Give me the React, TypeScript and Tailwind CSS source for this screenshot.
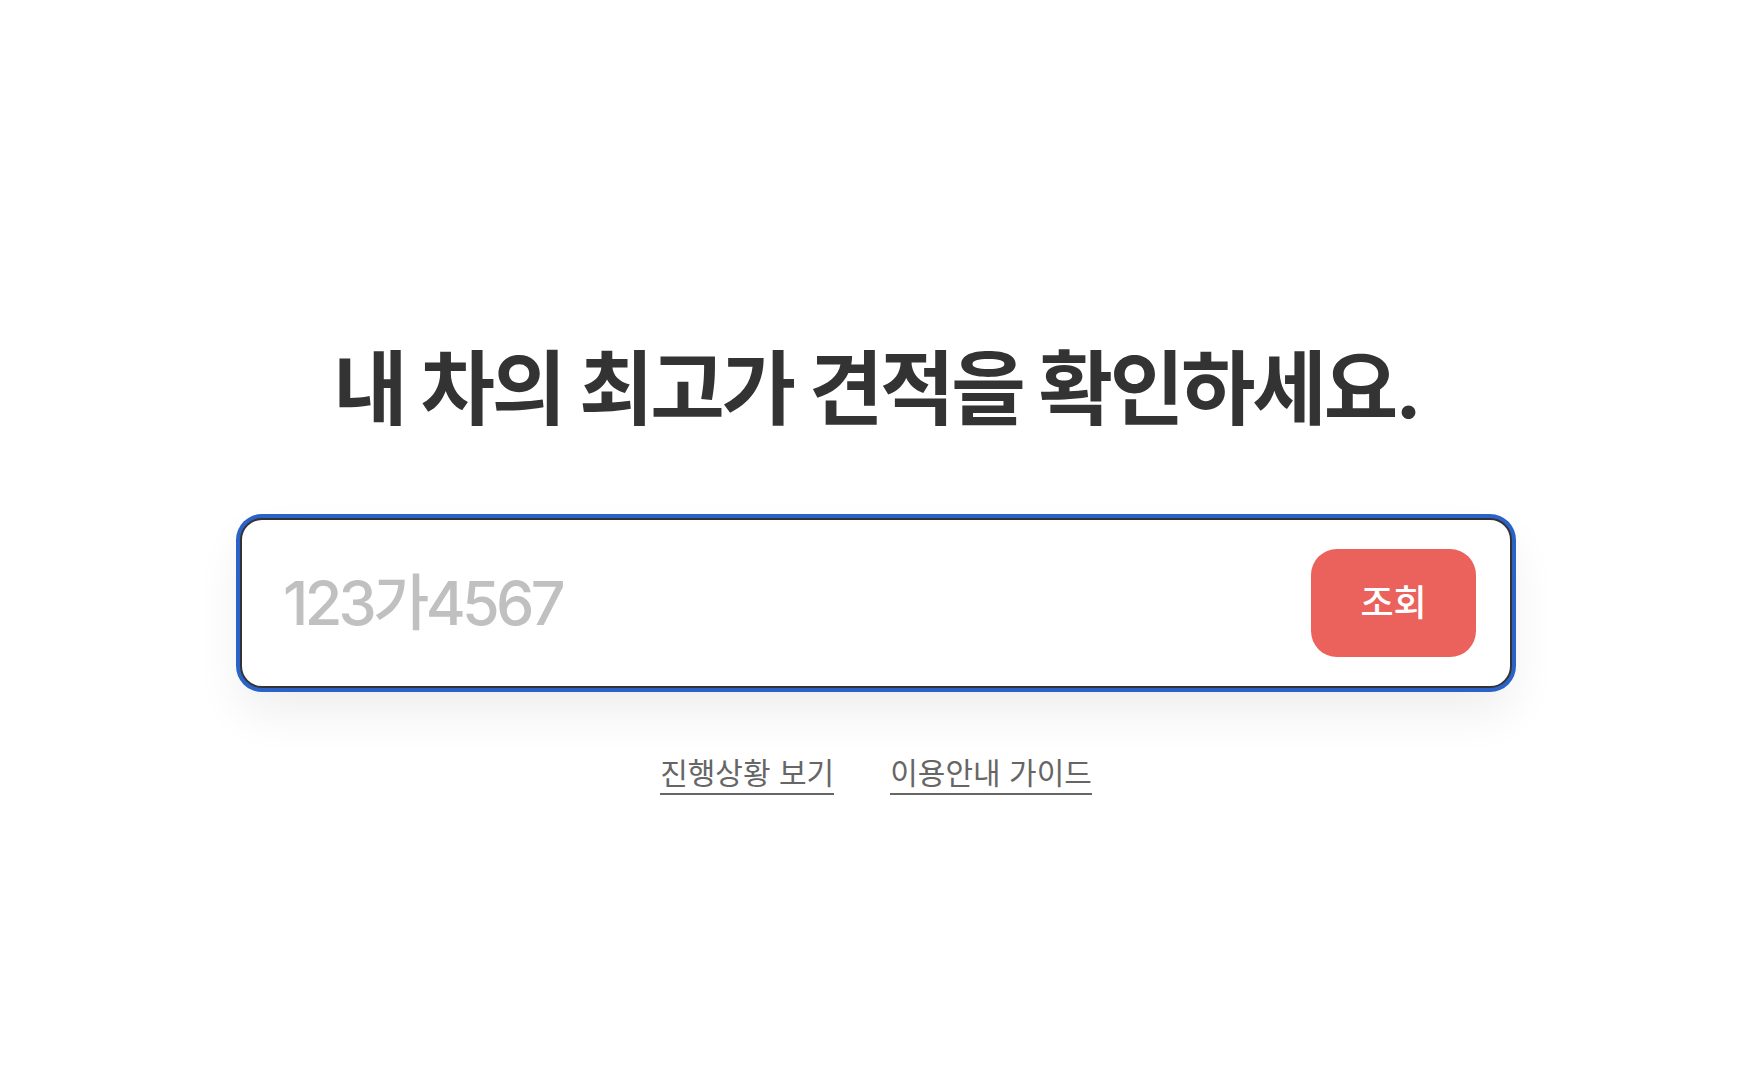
import { useState } from "react";

const font = { fontFamily: 'Inter, "Noto Sans CJK KR", sans-serif' };

export default function App() {
  const [plate, setPlate] = useState("");

  return (
    <div className="min-h-screen bg-white flex flex-col items-center pt-[341px] pr-3" style={font}>
      <h1 className="text-[81px] leading-[1.2] font-bold tracking-[-0.04em] text-[#333]">내 차의 최고가 견적을 확인하세요.</h1>

      <div className="mt-[80px] w-[1272px] h-[170px] flex items-center rounded-[22px] border-2 border-[#333] bg-white ring-4 ring-[#2b62c8] shadow-[0_24px_48px_rgba(0,0,0,0.07)]">
        <input
          value={plate}
          onChange={(e) => setPlate(e.target.value)}
          placeholder="123가4567"
          className="flex-1 min-w-0 h-full bg-transparent pl-[41px] text-[61px] font-medium tracking-[-0.06em] text-[#333] placeholder:text-[#c0c0c0] outline-none"
        />
        <button className="mr-[34px] w-[165px] h-[108px] rounded-[26px] bg-[#eb625d] text-white text-[36px] font-medium">조회</button>
      </div>

      <div className="mt-[67px] flex gap-[56px] text-[30px] text-[#666]">
        <a href="#" className="border-b-2 border-[#666] leading-[1.25]">진행상황 보기</a>
        <a href="#" className="border-b-2 border-[#666] leading-[1.25]">이용안내 가이드</a>
      </div>
    </div>
  );
}
